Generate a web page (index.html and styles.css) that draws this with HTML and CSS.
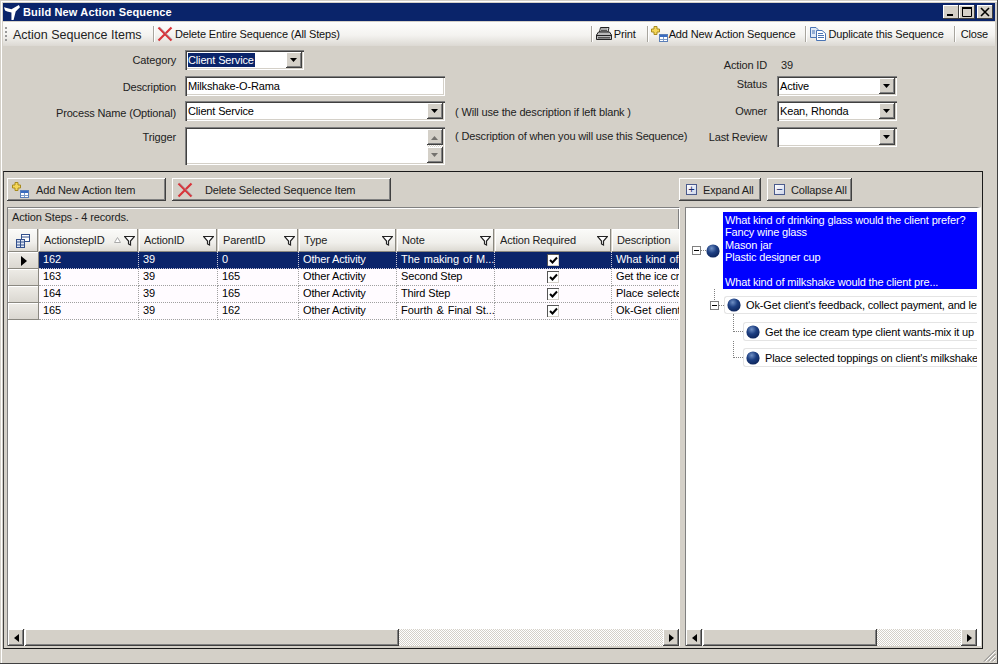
FILE: index.html
```html
<!DOCTYPE html>
<html lang="en">
<head>
<meta charset="utf-8">
<title>Build New Action Sequence</title>
<link rel="stylesheet" href="styles.css">
</head>
<body>
<svg class="defs" width="0" height="0" aria-hidden="true">
  <defs>
    <radialGradient id="ball" cx="0.4" cy="0.3" r="0.8">
      <stop offset="0" stop-color="#6f8fc4"/>
      <stop offset="0.45" stop-color="#1d3f82"/>
      <stop offset="1" stop-color="#0a1f52"/>
    </radialGradient>
    <symbol id="i-x" viewBox="0 0 16 16">
      <path d="M1.5 1.5 L14.5 14.5 M14.5 1.5 L1.5 14.5" stroke="#d8343a" stroke-width="2.2" fill="none"/>
      <path d="M2.5 1 L15 13.5" stroke="#9aa0b0" stroke-width="0.7" fill="none"/>
    </symbol>
    <symbol id="i-add" viewBox="0 0 17 16">
      <rect x="8.5" y="8.5" width="8" height="7" fill="#fff" stroke="#5b7fb8"/>
      <rect x="9" y="9" width="7" height="2" fill="#3a6cc0"/>
      <path d="M9 13.5H16M12.5 11V15" stroke="#7d9cc9"/>
      <path d="M3 0.5H6V3H8.5V6H6V8.5H3V6H0.5V3H3Z" fill="#f5d75a" stroke="#a98b1c"/>
    </symbol>
    <symbol id="i-filter" viewBox="0 0 11 11">
      <path d="M0.5 1.5H10.5L6.5 6V10L4.5 9V6Z" fill="#fff" stroke="#222" stroke-width="1.2"/>
    </symbol>
    <symbol id="i-ball" viewBox="0 0 14 14">
      <circle cx="7" cy="7" r="6.6" fill="url(#ball)"/>
    </symbol>
    <symbol id="i-down" viewBox="0 0 8 5">
      <path d="M0 0H7L3.5 4Z" fill="#000"/>
    </symbol>
    <symbol id="i-check" viewBox="0 0 9 9">
      <path d="M1 4L3.5 6.5L8 1.5" fill="none" stroke="#000" stroke-width="2"/>
    </symbol>
  </defs>
</svg>

<div class="window">
  <header class="titlebar">
    <svg class="app-icon" viewBox="0 0 16 16"><rect width="16" height="16" fill="#0a246a"/><path d="M0 3L7 5L14 1L15 3L11 7L9 15L7 15L7 8L3 7L1 6Z" fill="#fff"/></svg>
    <span class="title-text">Build New Action Sequence</span>
    <div class="win-buttons">
      <span class="win-btn"><svg viewBox="0 0 14 12"><rect x="3" y="8" width="6" height="2" fill="#000"/></svg></span>
      <span class="win-btn"><svg viewBox="0 0 14 12"><path d="M2.5 1.5H11.5V10.5H2.5Z" fill="none" stroke="#000"/><rect x="2" y="1" width="10" height="2" fill="#000"/></svg></span>
      <span class="win-btn win-btn-close"><svg viewBox="0 0 14 12"><path d="M3 2L11 10M11 2L3 10" stroke="#000" stroke-width="1.6"/></svg></span>
    </div>
  </header>

  <nav class="toolbar">
    <span class="grip"></span>
    <span class="toolbar-title">Action Sequence Items</span>
    <span class="sep"></span>
    <svg class="tb-icon tb-x"><use href="#i-x"/></svg>
    <span class="tb-text">Delete Entire Sequence (All Steps)</span>
    <span class="sep sep-print"></span>
    <svg class="tb-icon tb-print" viewBox="0 0 16 14">
      <path d="M4.5 .5H13L12 5H3.5Z" fill="#fff" stroke="#222"/>
      <path d="M5 2H11.5M4.8 3.5H11.2" stroke="#555"/>
      <path d="M2.5 5H13.5L15.5 8V12.5H.5V8Z" fill="#b9b9b9" stroke="#222"/>
      <path d="M1 8.5H15" stroke="#222"/>
      <rect x="2" y="10" width="12" height="1.5" fill="#555"/>
    </svg>
    <span class="tb-text tb-gap-print">Print</span>
    <span class="sep"></span>
    <svg class="tb-icon tb-add"><use href="#i-add"/></svg>
    <span class="tb-text tb-gap">Add New Action Sequence</span>
    <span class="sep"></span>
    <svg class="tb-icon tb-dup" viewBox="0 0 16 14">
      <path d="M.5 .5H6L8 2.5V10.5H.5Z" fill="#dfe9f7" stroke="#4a74b4"/>
      <path d="M6.5 3.5H12L15.5 6.5V13.5H6.5Z" fill="#fff" stroke="#4a74b4"/>
      <path d="M8 6.5H13M8 8.5H14M8 10.5H14M2 4H5M2 6H5" stroke="#4a74b4"/>
    </svg>
    <span class="tb-text tb-gap-dup">Duplicate this Sequence</span>
    <span class="sep"></span>
    <span class="tb-text tb-close">Close</span>
  </nav>

  <section class="form">
    <div class="form-left">
      <label class="lbl lbl-top">Category</label>
      <div class="combo combo-cat"><span class="combo-val"><span class="selected-text">Client Service</span></span><span class="drop"><svg><use href="#i-down"/></svg></span></div>
      <span></span>
      <label class="lbl lbl-desc">Description</label>
      <div class="combo combo-wide"><span class="combo-val">Milkshake-O-Rama</span></div>
      <span></span>
      <label class="lbl lbl-proc">Process Name (Optional)</label>
      <div class="combo combo-wide"><span class="combo-val">Client Service</span><span class="drop"><svg><use href="#i-down"/></svg></span></div>
      <span class="note note-proc">( Will use the description if left blank )</span>
      <label class="lbl lbl-trig">Trigger</label>
      <div class="combo combo-wide combo-memo">
        <span class="combo-val"></span>
        <span class="memo-scroll">
          <span class="drop drop-gray"><svg class="flip"><use href="#i-down"/></svg></span>
          <span class="drop drop-gray"><svg><use href="#i-down"/></svg></span>
        </span>
      </div>
      <span class="note note-trig">( Description of when you will use this Sequence)</span>
    </div>
    <div class="form-right">
      <label class="lbl lbl-id">Action ID</label>
      <span class="id-val">39</span>
      <label class="lbl lbl-status">Status</label>
      <div class="combo"><span class="combo-val">Active</span><span class="drop"><svg><use href="#i-down"/></svg></span></div>
      <label class="lbl lbl-owner">Owner</label>
      <div class="combo"><span class="combo-val">Kean, Rhonda</span><span class="drop"><svg><use href="#i-down"/></svg></span></div>
      <label class="lbl lbl-trig">Last Review</label>
      <div class="combo"><span class="combo-val"></span><span class="drop"><svg><use href="#i-down"/></svg></span></div>
    </div>
  </section>

  <main class="panel">
    <div class="panel-buttons">
      <button class="btn btn-add"><svg class="btn-icon"><use href="#i-add"/></svg><span>Add New Action Item</span></button>
      <button class="btn btn-del"><svg class="btn-icon btn-icon-x"><use href="#i-x"/></svg><span>Delete Selected Sequence Item</span></button>
      <button class="btn btn-expand"><span class="pm">+</span><span>Expand All</span></button>
      <button class="btn btn-collapse"><span class="pm">&minus;</span><span>Collapse All</span></button>
    </div>
    <div class="split">
      <div class="pane grid-pane">
        <div class="caption">Action Steps - 4 records.</div>
        <div class="grid-body">
          <div class="grid-row grid-head">
            <div class="hcell hcell-corner"><svg class="chooser" viewBox="0 0 14 14"><rect x="5.5" y=".5" width="8" height="7" fill="#fff" stroke="#33508c"/><rect x=".5" y="5.5" width="8" height="8" fill="#dfe7f5" stroke="#33508c"/><path d="M6 3H13M1 8H8M1 11H8M4.5 6V13" stroke="#33508c"/></svg></div>
            <div class="hcell"><span class="hcell-text">ActionstepID</span><svg class="sort" viewBox="0 0 7 6"><path d="M3.5 .5L6.5 5.5H.5Z" fill="#fff" stroke="#aaa"/></svg><svg class="funnel"><use href="#i-filter"/></svg></div>
            <div class="hcell"><span class="hcell-text">ActionID</span><svg class="funnel"><use href="#i-filter"/></svg></div>
            <div class="hcell"><span class="hcell-text">ParentID</span><svg class="funnel"><use href="#i-filter"/></svg></div>
            <div class="hcell"><span class="hcell-text">Type</span><svg class="funnel"><use href="#i-filter"/></svg></div>
            <div class="hcell"><span class="hcell-text">Note</span><svg class="funnel"><use href="#i-filter"/></svg></div>
            <div class="hcell"><span class="hcell-text">Action Required</span><svg class="funnel"><use href="#i-filter"/></svg></div>
            <div class="hcell"><span class="hcell-text">Description</span></div>
          </div>
          <div class="grid-row data-row is-current">
            <div class="rowhead"><svg class="cur" viewBox="0 0 6 10"><path d="M0 0L6 5L0 10Z" fill="#000"/></svg></div>
            <div class="cell">162</div><div class="cell">39</div><div class="cell">0</div><div class="cell">Other Activity</div><div class="cell cell-wide">The making of M...</div>
            <div class="cell cell-check"><span class="check"><svg><use href="#i-check"/></svg></span></div>
            <div class="cell cell-wide">What kind of drinking glass</div>
          </div>
          <div class="grid-row data-row">
            <div class="rowhead"></div>
            <div class="cell">163</div><div class="cell">39</div><div class="cell">165</div><div class="cell">Other Activity</div><div class="cell">Second Step</div>
            <div class="cell cell-check"><span class="check"><svg><use href="#i-check"/></svg></span></div>
            <div class="cell">Get the ice cream type</div>
          </div>
          <div class="grid-row data-row">
            <div class="rowhead"></div>
            <div class="cell">164</div><div class="cell">39</div><div class="cell">165</div><div class="cell">Other Activity</div><div class="cell">Third Step</div>
            <div class="cell cell-check"><span class="check"><svg><use href="#i-check"/></svg></span></div>
            <div class="cell cell-wide">Place selected toppings</div>
          </div>
          <div class="grid-row data-row">
            <div class="rowhead"></div>
            <div class="cell">165</div><div class="cell">39</div><div class="cell">162</div><div class="cell">Other Activity</div><div class="cell cell-wide">Fourth &amp; Final St...</div>
            <div class="cell cell-check"><span class="check"><svg><use href="#i-check"/></svg></span></div>
            <div class="cell cell-wide">Ok-Get client's feedback</div>
          </div>
        </div>
        <div class="hscroll hscroll-grid">
          <span class="sb-btn"><svg viewBox="0 0 5 8"><path d="M5 0V8L0 4Z" fill="#000"/></svg></span>
          <span class="sb-thumb"></span>
          <span class="sb-track"></span>
          <span class="sb-btn"><svg viewBox="0 0 5 8"><path d="M0 0V8L5 4Z" fill="#000"/></svg></span>
        </div>
      </div>

      <div class="pane tree-pane">
        <div class="tree">
          <div class="tree-node node-root">
            <span class="toggle"></span><span class="link"></span>
            <svg class="ball"><use href="#i-ball"/></svg>
            <div class="node-selected">What kind of drinking glass would the client prefer?<br>Fancy wine glass<br>Mason jar<br>Plastic designer cup<br><br>What kind of milkshake would the client pre...</div>
          </div>
          <div class="tree-node node-l1">
            <span class="toggle"></span><span class="link"></span>
            <div class="node-box"><svg class="ball"><use href="#i-ball"/></svg><span>Ok-Get client's feedback, collect payment, and let them enjoy</span></div>
          </div>
          <div class="tree-node node-l2">
            <span class="link link-long"></span>
            <div class="node-box"><svg class="ball"><use href="#i-ball"/></svg><span>Get the ice cream type client wants-mix it up in the blender</span></div>
          </div>
          <div class="tree-node node-l2 node-l2-last">
            <span class="link link-long"></span>
            <div class="node-box"><svg class="ball"><use href="#i-ball"/></svg><span>Place selected toppings on client's milkshake and serve</span></div>
          </div>
        </div>
        <div class="hscroll hscroll-tree">
          <span class="sb-btn"><svg viewBox="0 0 5 8"><path d="M5 0V8L0 4Z" fill="#000"/></svg></span>
          <span class="sb-thumb"></span>
          <span class="sb-track"></span>
          <span class="sb-btn"><svg viewBox="0 0 5 8"><path d="M0 0V8L5 4Z" fill="#000"/></svg></span>
        </div>
      </div>
    </div>
  </main>
  <footer class="statusbar">
    <svg class="size-grip" viewBox="0 0 13 13"><path d="M12.5 1L1 12.5M12.5 5L5 12.5M12.5 9L9 12.5" stroke="#808080" fill="none"/><path d="M12.5 2.5L2.5 12.5M12.5 6.5L6.5 12.5M12.5 10.5L10.5 12.5" stroke="#fff" fill="none"/></svg>
  </footer>
</div>
</body>
</html>
```

FILE: styles.css
```css
* { box-sizing: border-box; }
html, body { margin: 0; padding: 0; }
body {
  width: 998px;
  height: 664px;
  overflow: hidden;
  font-family: "Liberation Sans", Arial, sans-serif;
  font-size: 11px;
  letter-spacing: -0.15px;
  color: #000;
  background: #d4d0c8;
}
.defs { position: absolute; }

.window {
  width: 998px;
  height: 664px;
  display: flex;
  flex-direction: column;
  padding: 3px 3px 2px;
  background: #d4d0c8;
  box-shadow: inset -1px -1px #404040, inset 1px 1px #d4d0c8, inset 2px 2px #fff;
}

/* title bar */
.titlebar {
  height: 18px;
  flex: none;
  display: flex;
  align-items: center;
  background: #0a246a;
  color: #fff;
}
.app-icon { width: 17px; height: 17px; margin: 0 2px 0 1px; flex: none; }
.title-text { font-weight: bold; font-size: 11px; letter-spacing: 0.15px; white-space: nowrap; }
.win-buttons { margin-left: auto; display: flex; margin-right: 2px; }
.win-btn {
  width: 16px;
  height: 14px;
  background: #d4d0c8;
  box-shadow: inset -1px -1px #404040, inset 1px 1px #fff;
  display: flex;
  align-items: center;
  justify-content: center;
}
.win-btn svg { width: 14px; height: 12px; }
.win-btn-close { margin-left: 2px; }

/* toolbar */
.toolbar {
  height: 24px;
  margin-top: 1px;
  flex: none;
  display: flex;
  align-items: center;
  padding-left: 2px;
  background: linear-gradient(#fdfdfc, #f4f3f0 55%, #dcd9d3);
}
.grip {
  width: 2px;
  height: 14px;
  flex: none;
  background: repeating-linear-gradient(#9a9a9a 0 2px, transparent 2px 4px);
}
.toolbar-title {
  font-size: 12.5px;
  letter-spacing: 0;
  margin-left: 6px;
  padding-top: 1px;
  width: 140px;
  white-space: nowrap;
  color: #222;
}
.sep { width: 1px; height: 16px; background: #a8a59e; box-shadow: 1px 0 #fff; flex: none; }
.tb-icon { flex: none; }
.tb-x { width: 16px; height: 16px; margin: 0 2px 0 3px; }
.tb-text { white-space: nowrap; color: #111; }
.tb-gap { margin-right: 10px; }
.tb-gap-print { margin-right: 11px; }
.tb-gap-dup { margin-right: 10px; }
.sep-print { margin-left: auto; }
.tb-print { width: 16px; height: 14px; margin: 0 2px 0 4px; }
.tb-add { width: 17px; height: 16px; margin: 0 1px 0 3px; }
.tb-dup { width: 16px; height: 14px; margin: 0 2px 0 4px; }
.tb-close { margin: 0 7px 0 6px; }

/* form */
.form {
  height: 125px;
  flex: none;
  display: flex;
  padding-top: 4px;
}
.form-left {
  display: grid;
  grid-template-columns: 173px 260px auto;
  grid-template-rows: 26px 25px 26px 38px;
  column-gap: 9px;
  align-items: start;
}
.form-right {
  margin-left: auto;
  margin-right: 98px;
  display: grid;
  grid-template-columns: 71px 120px;
  grid-template-rows: 26px 25px 26px 22px;
  column-gap: 10px;
  align-items: start;
}
.lbl { text-align: right; color: #222; white-space: nowrap; line-height: 14px; }
.lbl-top { margin-top: 3px; }
.lbl-desc { margin-top: 4px; }
.lbl-proc { margin-top: 5px; }
.lbl-trig { margin-top: 3px; }
.lbl-status { margin-top: 1px; }
.lbl-owner { margin-top: 3px; }
.lbl-id { margin-top: 8px; align-self: start; }
.id-val { margin: 8px 0 0 4px; line-height: 14px; color: #222; }
.note { margin: 2px 0 0 1px; white-space: nowrap; color: #222; line-height: 14px; }
.note-proc { margin-top: 4px; }

.combo {
  height: 20px;
  display: flex;
  align-items: stretch;
  background: #fff;
  padding: 2px;
  box-shadow: inset 1px 1px #808080, inset 2px 2px #404040, inset -1px -1px #fff, inset -2px -2px #d4d0c8;
  overflow: hidden;
}
.combo-cat { width: 119px; }
.combo-wide { width: 260px; }
.combo-memo { height: 38px; }
.combo-val { flex: 1; min-width: 0; padding: 1px 0 0 1px; line-height: 15px; white-space: nowrap; }
.selected-text { background: #0a246a; color: #fff; display: inline-block; line-height: 14px; padding-right: 1px; }
.drop {
  width: 16px;
  height: 16px;
  flex: none;
  display: flex;
  align-items: center;
  justify-content: center;
  background: #d4d0c8;
  box-shadow: inset -1px -1px #404040, inset 1px 1px #fff, inset -2px -2px #808080;
}
.drop svg { width: 8px; height: 5px; }
.drop-gray svg { opacity: .45; }
.flip { transform: scaleY(-1); }
.memo-scroll {
  width: 16px;
  flex: none;
  display: flex;
  flex-direction: column;
  justify-content: space-between;
  background: repeating-conic-gradient(#fff 0 25%, #d4d0c8 0 50%) 0 0 / 2px 2px;
}

/* main panel */
.panel {
  flex: none;
  width: 980px;
  height: 478px;
  border: 1px solid #1a1a1a;
  border-left-color: #404040;
  padding: 6px 0 2px 3px;
  display: flex;
  flex-direction: column;
}
.panel-buttons { display: flex; height: 23px; flex: none; }
.btn {
  height: 23px;
  padding: 0;
  border: 0;
  background: #d4d0c8;
  font: inherit;
  letter-spacing: inherit;
  color: #222;
  display: flex;
  align-items: center;
  box-shadow: inset -1px -1px #404040, inset 1px 1px #fff, inset -2px -2px #808080;
}
.btn-add { width: 159px; }
.btn-del { width: 219px; margin-left: 6px; }
.btn-expand { width: 82px; margin-left: 288px; padding-left: 7px; }
.btn-collapse { width: 85px; margin-left: 6px; padding-left: 7px; }
.btn-icon { width: 17px; height: 16px; margin: 0 7px 0 5px; flex: none; }
.btn-icon-x { width: 16px; height: 16px; margin: 0 12px 0 5px; }
.pm {
  width: 11px;
  height: 11px;
  margin-right: 6px;
  border: 1px solid #4a5a8c;
  background: linear-gradient(135deg, #fff, #cfd6ea);
  color: #1a2a6a;
  font-size: 11px;
  line-height: 8px;
  text-align: center;
}

.split { flex: 1; min-height: 0; display: flex; margin-top: 6px; }
.pane {
  display: flex;
  flex-direction: column;
  overflow: hidden;
  background: #fff;
}
.grid-pane {
  width: 673px;
  border: 1px solid #808080;
  border-right: 1px solid #fff;
  border-bottom: 0;
}
.caption {
  height: 21px;
  flex: none;
  background: #d4d0c8;
  color: #222;
  line-height: 19px;
  padding-left: 4px;
  box-shadow: inset 0 1px #fff, inset -1px 0 #808080;
  font-size: 11px;
}
.grid-body { flex: 1; min-height: 0; overflow: hidden; }
.grid-row {
  display: grid;
  grid-template-columns: 31px 100px 79px 81px 98px 98px 117px 100px;
  width: 704px;
}
.grid-head { height: 23px; }
.hcell {
  display: flex;
  align-items: center;
  padding: 0 3px 1px 5px;
  color: #222;
  background: linear-gradient(#fbfbf9, #f0efeb 60%, #dad7d0);
  box-shadow: inset -1px -1px #8a8880, inset 1px 1px #fff;
  border-right: 1px solid #d4d0c8;
  white-space: nowrap;
  overflow: hidden;
}
.hcell-text { flex: 1; min-width: 0; overflow: hidden; }
.hcell-corner { justify-content: center; padding: 0; }
.chooser { width: 14px; height: 14px; }
.sort { width: 7px; height: 6px; margin-right: 3px; flex: none; }
.funnel { width: 11px; height: 11px; flex: none; }
.data-row { height: 17px; line-height: 15px; }
.cell {
  border-right: 1px dotted #a0a0a0;
  border-bottom: 1px dotted #a0a0a0;
  padding-left: 4px;
  background: #fffbff;
  white-space: nowrap;
  overflow: hidden;
}
.cell-wide { word-spacing: 1px; letter-spacing: -0.05px; }
.is-current .cell { background: #0a246a; color: #fff; border-color: #c8c8d8; }
.rowhead {
  display: flex;
  align-items: center;
  justify-content: center;
  background: linear-gradient(#eeece7, #d9d6cf);
  box-shadow: inset -1px -1px #8a8880, inset 1px 1px #fff;
}
.cur { width: 6px; height: 10px; }
.cell-check { display: flex; align-items: center; justify-content: center; padding: 0; }
.check {
  width: 12px;
  height: 12px;
  display: flex;
  align-items: center;
  justify-content: center;
  background: #fff;
  box-shadow: inset 1px 1px #555, inset -1px -1px #d4d0c8;
}
.check svg { width: 9px; height: 9px; }

/* scrollbars */
.hscroll {
  height: 17px;
  flex: none;
  display: flex;
  box-shadow: inset 0 1px #d4d0c8;
  background: #fff;
}
.sb-btn {
  width: 16px;
  height: 17px;
  flex: none;
  display: flex;
  align-items: center;
  justify-content: center;
  background: #d4d0c8;
  box-shadow: inset -1px -1px #404040, inset 1px 1px #fff, inset -2px -2px #808080;
}
.sb-btn svg { width: 5px; height: 8px; }
.sb-thumb {
  flex: none;
  background: #d4d0c8;
  box-shadow: inset -1px -1px #404040, inset 1px 1px #fff, inset -2px -2px #808080;
}
.sb-track {
  flex: 1;
  background: repeating-conic-gradient(#fff 0 25%, #d4d0c8 0 50%) 0 0 / 2px 2px;
}
.hscroll-grid .sb-thumb { width: 374px; margin-left: 1px; }
.hscroll-tree .sb-thumb { width: 174px; margin-left: 1px; }

/* tree */
.tree-pane {
  width: 296px;
  margin-left: 5px;
  border: 1px solid #808080;
  border-bottom: 0;
  border-right: 4px solid #fff;
}
.tree { flex: 1; min-height: 0; overflow: hidden; padding-top: 4px; }
.tree-node { position: relative; display: flex; align-items: center; }
.toggle {
  width: 9px;
  height: 9px;
  flex: none;
  border: 1px solid #808080;
  background: linear-gradient(#000, #000) center / 5px 1px no-repeat #fff;
}
.link { width: 5px; flex: none; border-top: 1px dotted #808080; }
.ball { width: 14px; height: 14px; flex: none; }
.node-root { padding-left: 6px; }
.node-root .ball { margin-right: 3px; }
.node-selected {
  flex: 1;
  min-width: 0;
  height: 77px;
  background: #0000ff;
  color: #fff;
  padding: 2px 0 0 2px;
  line-height: 12.4px;
  white-space: nowrap;
  overflow: hidden;
}
.node-box {
  flex: 1;
  min-width: 0;
  height: 19px;
  display: flex;
  align-items: center;
  gap: 5px;
  padding-left: 2px;
  border: 1px solid #e4e4e4;
  border-right: 0;
  border-radius: 3px 0 0 3px;
  white-space: nowrap;
  overflow: hidden;
}
.node-l1 { margin-top: 7px; padding-left: 24px; }
.node-l1 .node-box { height: 18px; }
.node-l1::before {
  content: "";
  position: absolute;
  left: 28px;
  top: -7px;
  height: 13px;
  border-left: 1px dotted #808080;
}
.node-l2 { margin-top: 7px; padding-left: 47px; }
.node-l1 + .node-l2 { margin-top: 8px; }
.link-long { width: 10px; }
.node-l2::before {
  content: "";
  position: absolute;
  left: 47px;
  top: -8px;
  height: 18px;
  border-left: 1px dotted #808080;
}
.node-l2-last::before { top: -7px; height: 17px; }

/* status bar */
.statusbar {
  flex: 1;
  display: flex;
  justify-content: flex-end;
  align-items: flex-end;
}
.size-grip { width: 13px; height: 13px; margin-right: -1px; }
```
